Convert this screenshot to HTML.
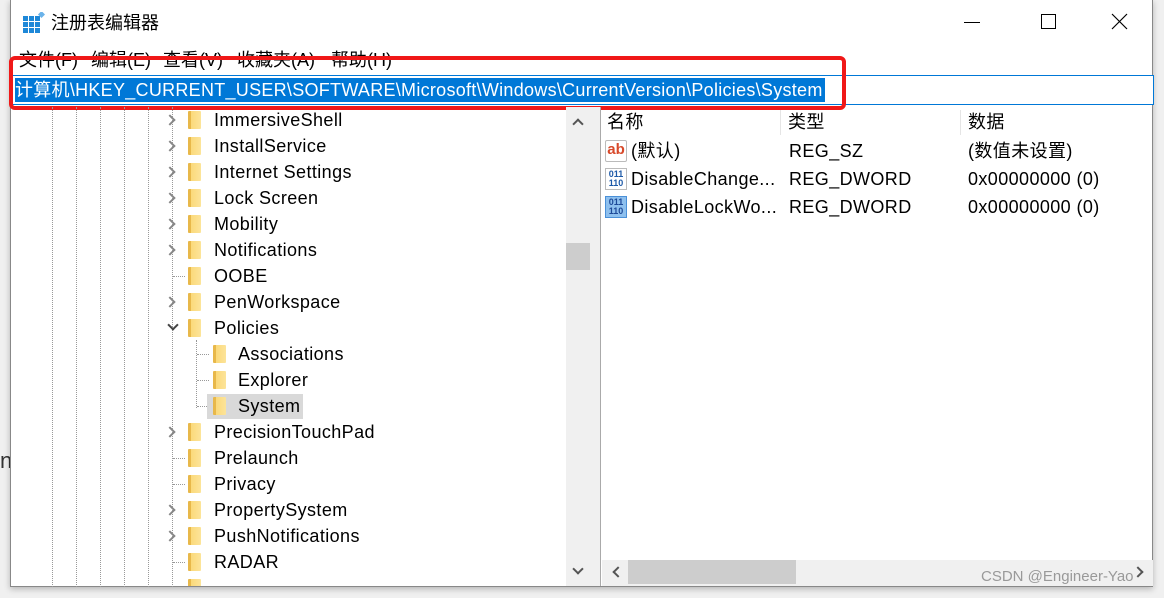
<!DOCTYPE html>
<html><head><meta charset="utf-8"><style>
*{margin:0;padding:0;box-sizing:border-box}
body{width:1164px;height:598px;background:#f0f0f0;position:relative;overflow:hidden;font-family:"Liberation Sans","Noto Sans CJK SC",sans-serif;color:#000}
.win{position:absolute;left:10px;top:0;width:1143px;height:587px;background:#fff;border:1px solid #888;border-top:none;box-shadow:0 2px 6px rgba(0,0,0,.25)}
.a{position:absolute;white-space:nowrap}
.t{font-size:18px;line-height:26px;letter-spacing:0.4px}
.m{position:absolute;top:47px;font-size:18px;line-height:26px}
.fold{position:absolute;width:13px;height:18px;background:linear-gradient(90deg,#e8b84a 0,#e8b84a 3px,#fbd97a 3px,#fce49a 100%);border-radius:1px}
.chev{position:absolute;width:8px;height:8px;border-right:2px solid #888;border-bottom:2px solid #888;transform:rotate(-45deg)}
.vd{position:absolute;width:0;border-left:1px dotted #999}
.hd{position:absolute;height:0;border-top:1px dotted #999}
</style></head><body>
<div class="a" style="left:0;top:448px;font-size:22px;color:#333">n</div>
<div class="win">
<svg class="a" style="left:12px;top:12px" width="22" height="22" viewBox="0 0 22 22"><g fill="#1e88d8"><rect x="0" y="4" width="5" height="5"/><rect x="6" y="4" width="5" height="5"/><rect x="12" y="4" width="5" height="5"/><rect x="0" y="10" width="5" height="5"/><rect x="6" y="10" width="5" height="5"/><rect x="12" y="10" width="5" height="5"/><rect x="0" y="16" width="5" height="5"/><rect x="6" y="16" width="5" height="5"/><rect x="12" y="16" width="5" height="5"/></g><rect x="16" y="0" width="5" height="5" fill="#6bb3ea" transform="rotate(45 18.5 2.5)"/></svg>
<div class="a" style="left:40px;top:10px;font-size:18px;line-height:26px">注册表编辑器</div>
<div class="a" style="left:953px;top:22px;width:16px;height:1px;background:#000"></div>
<div class="a" style="left:1030px;top:14px;width:15px;height:15px;border:1px solid #000"></div>
<svg class="a" style="left:1100px;top:13px" width="17" height="17"><path d="M1 1L16 16M16 1L1 16" stroke="#000" stroke-width="1.2"/></svg>
<div class="m" style="left:8px">文件(F)</div>
<div class="m" style="left:80px">编辑(E)</div>
<div class="m" style="left:152px">查看(V)</div>
<div class="m" style="left:226px">收藏夹(A)</div>
<div class="m" style="left:320px">帮助(H)</div>
<div class="a" style="left:0;top:75px;width:1143px;height:30px;border:1px solid #0078d7;background:#fff"></div>
<div class="a" style="left:4px;top:78px;height:24px;background:#0078d7;color:#fff;font-size:18px;line-height:24px;padding-right:2px;letter-spacing:0.28px">计算机\HKEY_CURRENT_USER\SOFTWARE\Microsoft\Windows\CurrentVersion\Policies\System</div>
<div class="a" style="left:-2px;top:56px;width:837px;height:54px;border:4px solid #f01818;border-radius:6px"></div>
<div class="vd" style="left:41px;top:107px;height:480px"></div>
<div class="vd" style="left:65px;top:107px;height:480px"></div>
<div class="vd" style="left:89px;top:107px;height:480px"></div>
<div class="vd" style="left:113px;top:107px;height:480px"></div>
<div class="vd" style="left:137px;top:107px;height:480px"></div>
<div class="vd" style="left:161px;top:107px;height:480px"></div>
<div class="vd" style="left:185px;top:340px;height:68px"></div>
<div class="hd" style="left:186px;top:354px;width:12px"></div>
<div class="hd" style="left:186px;top:380px;width:12px"></div>
<div class="hd" style="left:186px;top:406px;width:12px"></div>
<div class="a" style="left:196px;top:394px;width:96px;height:25px;background:#d9d9d9"></div>

<div class="chev" style="left:155px;top:116px"></div><div class="fold" style="left:177px;top:111px"></div><div class="a t" style="left:203px;top:107px">ImmersiveShell</div>
<div class="chev" style="left:155px;top:142px"></div><div class="fold" style="left:177px;top:137px"></div><div class="a t" style="left:203px;top:133px">InstallService</div>
<div class="chev" style="left:155px;top:168px"></div><div class="fold" style="left:177px;top:163px"></div><div class="a t" style="left:203px;top:159px">Internet Settings</div>
<div class="chev" style="left:155px;top:194px"></div><div class="fold" style="left:177px;top:189px"></div><div class="a t" style="left:203px;top:185px">Lock Screen</div>
<div class="chev" style="left:155px;top:220px"></div><div class="fold" style="left:177px;top:215px"></div><div class="a t" style="left:203px;top:211px">Mobility</div>
<div class="chev" style="left:155px;top:246px"></div><div class="fold" style="left:177px;top:241px"></div><div class="a t" style="left:203px;top:237px">Notifications</div>
<div class="hd" style="left:162px;top:276px;width:12px"></div><div class="fold" style="left:177px;top:267px"></div><div class="a t" style="left:203px;top:263px">OOBE</div>
<div class="chev" style="left:155px;top:298px"></div><div class="fold" style="left:177px;top:293px"></div><div class="a t" style="left:203px;top:289px">PenWorkspace</div>
<div class="chev" style="left:158px;top:321px;transform:rotate(45deg);border-color:#444"></div><div class="fold" style="left:177px;top:319px"></div><div class="a t" style="left:203px;top:315px">Policies</div>
<div class="fold" style="left:202px;top:345px"></div><div class="a t" style="left:227px;top:341px">Associations</div>
<div class="fold" style="left:202px;top:371px"></div><div class="a t" style="left:227px;top:367px">Explorer</div>
<div class="fold" style="left:202px;top:397px"></div><div class="a t" style="left:227px;top:393px">System</div>
<div class="chev" style="left:155px;top:428px"></div><div class="fold" style="left:177px;top:423px"></div><div class="a t" style="left:203px;top:419px">PrecisionTouchPad</div>
<div class="hd" style="left:162px;top:458px;width:12px"></div><div class="fold" style="left:177px;top:449px"></div><div class="a t" style="left:203px;top:445px">Prelaunch</div>
<div class="hd" style="left:162px;top:484px;width:12px"></div><div class="fold" style="left:177px;top:475px"></div><div class="a t" style="left:203px;top:471px">Privacy</div>
<div class="chev" style="left:155px;top:506px"></div><div class="fold" style="left:177px;top:501px"></div><div class="a t" style="left:203px;top:497px">PropertySystem</div>
<div class="chev" style="left:155px;top:532px"></div><div class="fold" style="left:177px;top:527px"></div><div class="a t" style="left:203px;top:523px">PushNotifications</div>
<div class="hd" style="left:162px;top:562px;width:12px"></div><div class="fold" style="left:177px;top:553px"></div><div class="a t" style="left:203px;top:549px">RADAR</div>
<div class="a" style="left:0;top:578px;width:555px;height:8px;overflow:hidden"><div class="fold" style="left:177px;top:1px"></div></div>
<div class="a" style="left:555px;top:107px;width:24px;height:479px;background:#f0f0f0"></div>
<div class="a" style="left:555px;top:243px;width:24px;height:27px;background:#cdcdcd"></div>
<div class="chev" style="left:563px;top:120px;transform:rotate(-135deg);border-color:#555"></div>
<div class="chev" style="left:563px;top:565px;transform:rotate(45deg);border-color:#555"></div>
<div class="a" style="left:579px;top:107px;width:11px;height:479px;background:#f0f0f0;border-right:1px solid #aaa"></div>
<div class="a" style="left:769px;top:110px;width:1px;height:25px;background:#e5e5e5"></div>
<div class="a" style="left:949px;top:110px;width:1px;height:25px;background:#e5e5e5"></div>
<div class="a t" style="left:596px;top:109px">名称</div>
<div class="a t" style="left:777px;top:109px">类型</div>
<div class="a t" style="left:957px;top:109px">数据</div>
<div class="a" style="left:594px;top:140px;width:22px;height:22px;border:1px solid #bbb;background:#fff;color:#d8492a;font-weight:bold;font-size:15px;line-height:18px;text-align:center;border-radius:2px">ab</div>
<div class="a t" style="left:620px;top:138px">(默认)</div><div class="a t" style="left:778px;top:138px">REG_SZ</div><div class="a t" style="left:957px;top:138px">(数值未设置)</div>
<div class="a" style="left:594px;top:168px;width:22px;height:22px;border:1px solid #bbb;background:#fff;color:#1e5aa8;font-weight:bold;font-size:9px;line-height:9px;text-align:center;padding-top:1px">011<br>110</div>
<div class="a t" style="left:620px;top:166px">DisableChange...</div><div class="a t" style="left:778px;top:166px">REG_DWORD</div><div class="a t" style="left:957px;top:166px">0x00000000 (0)</div>
<div class="a" style="left:594px;top:196px;width:22px;height:22px;border:1px solid #4a90d8;background:#8ec0ee;color:#1e4a98;font-weight:bold;font-size:9px;line-height:9px;text-align:center;padding-top:1px">011<br>110</div>
<div class="a t" style="left:620px;top:194px">DisableLockWo...</div><div class="a t" style="left:778px;top:194px">REG_DWORD</div><div class="a t" style="left:957px;top:194px">0x00000000 (0)</div>
<div class="a" style="left:591px;top:560px;width:551px;height:26px;background:#f0f0f0"></div>
<div class="a" style="left:617px;top:560px;width:168px;height:24px;background:#cdcdcd"></div>
<div class="chev" style="left:603px;top:568px;transform:rotate(135deg);border-color:#555"></div>
<div class="chev" style="left:1123px;top:568px;border-color:#555"></div>
<div class="a" style="left:970px;top:568px;font-size:15px;color:#999">CSDN @Engineer-Yao</div>
</div>
</body></html>
